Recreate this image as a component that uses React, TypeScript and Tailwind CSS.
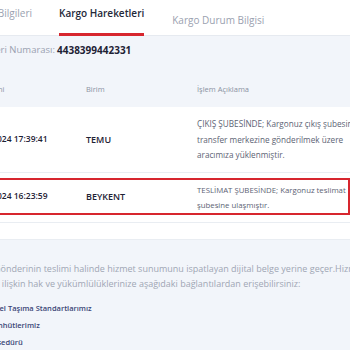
import React from 'react';

const rows = [
  {
    date: '18.11.2024 17:39:41',
    unit: 'TEMU',
    desc: ['ÇIKIŞ ŞUBESİNDE; Kargonuz çıkış şubesinden', 'transfer merkezine gönderilmek üzere', 'aracımıza yüklenmiştir.'],
    active: false,
  },
  {
    date: '20.11.2024 16:23:59',
    unit: 'BEYKENT',
    desc: ['TESLİMAT ŞUBESİNDE; Kargonuz teslimat', 'şubesine ulaşmıştır.'],
    active: true,
  },
];

const font = { fontFamily: '"Open Sans", "Noto Sans", sans-serif' };

export default function App() {
  return (
    <div className="w-[350px] h-[350px] overflow-hidden bg-white" style={font}>
      <div className="w-[430px] -ml-[48px] flex flex-col">
        {/* Tabs */}
        <div className="h-[36px] border-b border-[#e6eaf0] flex items-stretch">
          <div className="w-[80px] shrink-0 flex justify-end pt-[6px]">
            <span className="whitespace-nowrap text-[10px] leading-[14px] text-[#9aa1b0]">Gönderi Bilgileri</span>
          </div>
          <div className="ml-[27px] flex flex-col justify-between pt-[6px]">
            <span className="whitespace-nowrap text-[10px] leading-[14px] font-semibold text-[#232839]">Kargo Hareketleri</span>
            <div className="h-[3px] bg-[#d7262e] mb-[-1px]" />
          </div>
          <div className="ml-[28px] pt-[6px]">
            <span className="whitespace-nowrap text-[10px] leading-[14px] text-[#9aa1b0]">Kargo Durum Bilgisi</span>
          </div>
        </div>

        {/* Info + table header */}
        <div className="bg-[#f2f5fa] h-[71px] flex flex-col">
          <div className="flex items-center pt-[7px]">
            <div className="w-[103px] shrink-0 flex justify-end">
              <span className="whitespace-nowrap text-[9.5px] leading-[14px] text-[#9aa1b0]">Gönderi Numarası:</span>
            </div>
            <span className="ml-[2px] text-[10px] leading-[14px] font-bold text-[#1e2235]">4438399442331</span>
          </div>
          <div className="grid grid-cols-[122px_111px_1fr] mt-[27px] text-[7.5px] leading-[10px] text-[#8b93a3]">
            <span className="pl-[12px]">İşlem Tarihi</span>
            <span className="pl-[12px]">Birim</span>
            <span className="pl-[12px]">İşlem Açıklama</span>
          </div>
        </div>

        {/* Rows */}
        {rows.map((r) =>
          r.active ? (
            <div key={r.date} className="h-[50px] border-b border-[#e9edf2] flex flex-col pt-[5px]">
              <div className="w-[398px] h-[37px] border-2 border-[#d7262e] grid grid-cols-[120px_111px_1fr] items-center">
                <span className="pl-[14px] whitespace-nowrap text-[8.5px] font-semibold text-[#1e2235]">{r.date}</span>
                <span className="pl-[12px] text-[9px] font-semibold text-[#1e2235]">{r.unit}</span>
                <div className="pl-[12px] pt-[2px] text-[7.8px] leading-[15px] text-[#5c6374] whitespace-nowrap">
                  {r.desc.map((d) => (
                    <div key={d}>{d}</div>
                  ))}
                </div>
              </div>
            </div>
          ) : (
            <div key={r.date} className="h-[66px] border-b border-[#e9edf2] grid grid-cols-[122px_111px_1fr] items-center">
              <span className="pl-[16px] whitespace-nowrap text-[8.5px] font-semibold text-[#1e2235]">{r.date}</span>
              <span className="pl-[12px] text-[9px] font-semibold text-[#1e2235]">{r.unit}</span>
              <div className="pl-[12px] text-[8.2px] leading-[15.5px] text-[#5c6374] whitespace-nowrap">
                {r.desc.map((d) => (
                  <div key={d}>{d}</div>
                ))}
              </div>
            </div>
          )
        )}

        <div className="h-[17px] border-b border-[#e9edf2]" />

        {/* Footer */}
        <div className="bg-[#f2f5fa] h-[120px] pt-[21px]">
          <div className="pl-[42px] text-[9px] leading-[15px] text-[#a0a6b4] whitespace-nowrap">
            <div>Gönderinin teslimi halinde hizmet sunumunu ispatlayan dijital belge yerine geçer.Hizmetlerimize</div>
            <div className="-ml-[5px]">na ilişkin hak ve yükümlülüklerinize aşağıdaki bağlantılardan erişebilirsiniz:</div>
          </div>
          <div className="pl-[33px] mt-[11px] flex flex-col gap-[5px] text-[7.5px] leading-[12px] font-semibold text-[#3b4677] whitespace-nowrap">
            <span>Genel Taşıma Standartlarımız</span>
            <span>Taahhütlerimiz</span>
            <span>Prosedürü</span>
          </div>
        </div>
      </div>
    </div>
  );
}
